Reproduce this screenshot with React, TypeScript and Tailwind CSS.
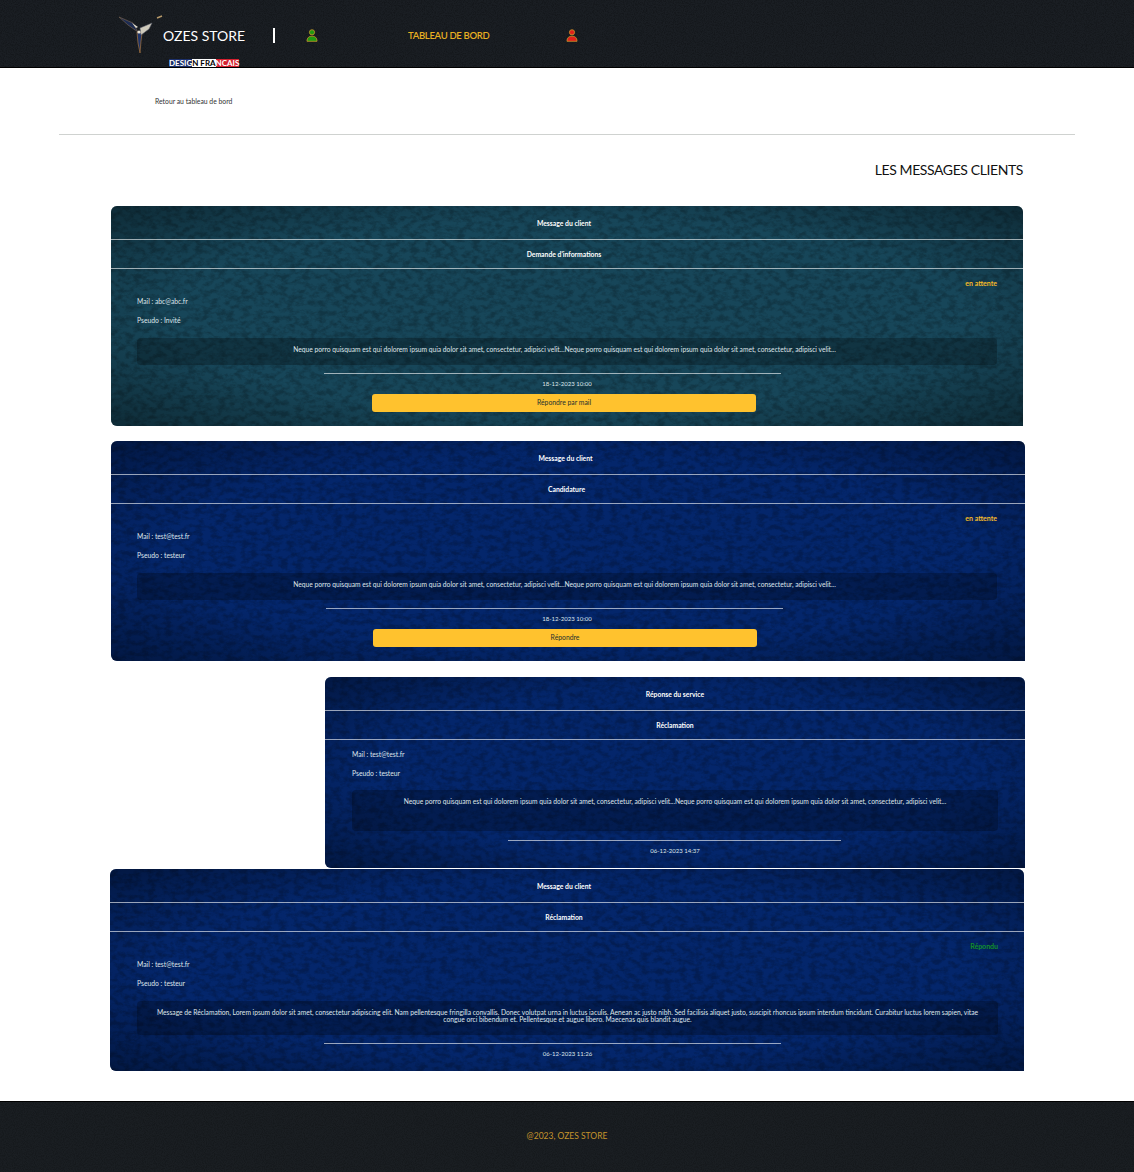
import React, { useId } from 'react';

const LOREM = 'Neque porro quisquam est qui dolorem ipsum quia dolor sit amet, consectetur, adipisci velit...Neque porro quisquam est qui dolorem ipsum quia dolor sit amet, consectetur, adipisci velit...';
const RECLAMATION = 'Message de Réclamation, Lorem ipsum dolor sit amet, consectetur adipiscing elit. Nam pellentesque fringilla convallis. Donec volutpat urna in luctus iaculis. Aenean ac justo nibh. Sed facilisis aliquet justo, suscipit rhoncus ipsum interdum tincidunt. Curabitur luctus lorem sapien, vitae congue orci bibendum et. Pellentesque et augue libero. Maecenas quis blandit augue.';

// grain drawn behind the panels
const Grain: React.FC<{ frequency: string; opacity: number; seed: number }> = ({ frequency, opacity, seed }) => {
  const id = useId();
  return (
    <svg className="absolute inset-0 w-full h-full pointer-events-none" aria-hidden="true">
      <filter id={id}>
        <feTurbulence type="fractalNoise" baseFrequency={frequency} numOctaves={5} seed={seed} />
        <feColorMatrix values="0 0 0 0 0  0 0 0 0 0  0 0 0 0 0  3 0 0 0 -1.2" />
      </filter>
      <rect width="100%" height="100%" filter={`url(#${id})`} opacity={opacity} />
    </svg>
  );
};

const UserIcon: React.FC<{ fill: string }> = ({ fill }) => (
  <svg width="12" height="13" viewBox="0 0 12 13" aria-hidden="true">
    <circle cx="6" cy="3.3" r="2.6" fill={fill} stroke="#c9962a" strokeWidth="0.8" />
    <path d="M1 12.3 C1 8.6 3 7.2 6 7.2 C9 7.2 11 8.6 11 12.3 Z" fill={fill} stroke="#c9962a" strokeWidth="0.8" />
  </svg>
);

const Logo = () => (
  <svg width="46" height="42" viewBox="0 0 46 42" className="shrink-0" aria-hidden="true">
    <path d="M1 2 L15 8 L20 17 L10 10 Z" fill="#1d2c52" stroke="#7d6650" strokeWidth="0.6" />
    <path d="M19 17 L24 18 L23 26 L22 38 L20 28 Z" fill="#1f3468" stroke="#a8743c" strokeWidth="0.7" />
    <path d="M22 13 L34 8 L31 14 L23 20 Z" fill="#cfcabb" stroke="#5c6170" strokeWidth="0.5" />
    <path d="M39 3 L44 1" stroke="#b89a6a" strokeWidth="1.5" />
    <path d="M14 8 L20 12 L18 13 Z" fill="#e6e2d6" />
    <circle cx="21" cy="17" r="1.6" fill="#e6e2d6" />
  </svg>
);

type CardProps = {
  tone: 'teal' | 'navy';
  className: string;
  title: string;
  subject: string;
  titleClass?: string;
  subjectClass?: string;
  status?: { label: string; className: string };
  mail: string;
  pseudo: string;
  body: string;
  boxClass: string;
  dividerClass: string;
  contentClass: string;
  date: string;
  action?: { label: string; className: string };
  seed: number;
};

const MessageCard: React.FC<CardProps> = ({
  tone, className, title, subject, titleClass, subjectClass, status, mail, pseudo, body, boxClass, dividerClass, contentClass, date, action, seed,
}) => (
  <section
    className={`relative overflow-hidden rounded-t-md rounded-bl-md text-[#dfe5ea] ${
      tone === 'teal' ? 'bg-[#174659]' : 'bg-[#04266b]'
    } ${className}`}
  >
    <Grain frequency="0.13 0.19" opacity={0.22} seed={seed} />
    <div className="absolute inset-0 bg-[radial-gradient(ellipse_at_center,transparent_62%,rgba(0,0,0,0.38)_100%)]" />
    <div className="relative">
      <h3 className={`h-[33px] pt-[1px] flex items-center justify-center text-[6.8px] font-bold text-white ${titleClass ?? ''}`}>{title}</h3>
      <div className="h-px bg-white/60" />
      <h4 className={`h-[28px] flex items-center justify-center text-[6.8px] font-bold text-white ${subjectClass ?? titleClass ?? ''}`}>{subject}</h4>
      <div className="h-px bg-white/60" />
      <div className={contentClass}>
        {status && (
          <div className="h-[19px] flex items-end justify-end">
            <span className={`text-[7px] font-bold ${status.className}`}>{status.label}</span>
          </div>
        )}
        <p className={`${status ? 'mt-[4px]' : 'mt-[5px]'} h-[19px] text-[6.75px] leading-[19px]`}>Mail : {mail}</p>
        <p className="h-[19px] text-[6.75px] leading-[19px]">Pseudo : {pseudo}</p>
        <div className={`rounded-[4px] bg-black/25 text-center text-[6.7px] leading-[6.5px] ${boxClass}`}>{body}</div>
        <div className={`h-px bg-white/60 ${dividerClass}`} />
        <p className="h-[19px] pb-[1px] flex items-center justify-center text-[6px]">{date}</p>
        {action && (
          <button className={`block h-[18px] mt-[1px] pb-[1px] rounded-[3px] bg-[#ffc22e] text-[6.8px] text-[#26302f] ${action.className}`}>
            {action.label}
          </button>
        )}
      </div>
    </div>
  </section>
);

export default function App() {
  return (
    <div className="w-[1134px] bg-white font-['Lato',sans-serif] text-[#222]">
      <header className="relative overflow-hidden h-[68px] bg-[#1a1e23] border-b border-black">
        <Grain frequency="0.9" opacity={0.2} seed={4} />
        <div className="relative flex items-start pl-[118px]">
          <div className="mt-[15px]"><Logo /></div>
          <div className="ml-[-1px] w-[80px] flex flex-col items-start">
            <span className="mt-[27px] text-[14px] leading-[18px] whitespace-nowrap text-white">OZES STORE</span>
            <span className="mt-[14px] ml-[6px] flex h-[9px] items-center text-[8px] leading-[9px] font-bold">
              <span className="bg-[#1b2f6b] text-white">DESIG</span>
              <span className="bg-white text-black">N FRA</span>
              <span className="bg-[#d4202f] text-white">NCAIS</span>
            </span>
          </div>
          <div className="ml-[30px] mt-[28px] w-[2px] h-[15px] bg-white" />
          <div className="ml-[31px] mt-[29px]"><UserIcon fill="#1f9a12" /></div>
          <a className="ml-[90px] mt-[29px] text-[9.5px] leading-[14px] font-semibold tracking-[-0.3px] text-[#e8b022]">TABLEAU DE BORD</a>
          <div className="ml-[76px] mt-[29px]"><UserIcon fill="#e0201c" /></div>
        </div>
      </header>

      <main className="pt-[28px] pb-[30px]">
        <a className="block ml-[155px] text-[6.8px] leading-[10px] text-[#333]">Retour au tableau de bord</a>
        <hr className="mt-[28px] mx-[59px] border-0 h-px bg-[#cfd2d0]" />
        <h2 className="mt-[26px] mr-[111px] text-right text-[14px] leading-[18px] tracking-[-0.4px] text-[#111]">LES MESSAGES CLIENTS</h2>

        <div className="mt-[27px] flex flex-col">
          <MessageCard
            tone="teal"
            className="ml-[111px] w-[912px] h-[220px]"
            title="Message du client"
            subject="Demande d'informations"
            titleClass="pr-[6px]"
            status={{ label: 'en attente', className: 'text-[#f4bb2a]' }}
            mail="abc@abc.fr"
            pseudo="Invité"
            body={LOREM}
            boxClass="mt-[8px] h-[27px] pt-[8px] pr-[5px]"
            dividerClass="mt-[8px] ml-[187px] w-[457px]"
            contentClass="px-[26px]"
            date="18-12-2023 10:00"
            action={{ label: 'Répondre par mail', className: 'w-[384px] ml-[235px]' }}
            seed={7}
          />
          <MessageCard
            tone="navy"
            className="mt-[15px] ml-[111px] w-[914px] h-[220px]"
            title="Message du client"
            subject="Candidature"
            titleClass="pr-[5px]"
            subjectClass="pr-[3px]"
            status={{ label: 'en attente', className: 'text-[#f4bb2a]' }}
            mail="test@test.fr"
            pseudo="testeur"
            body={LOREM}
            boxClass="mt-[8px] h-[27px] pt-[8px] pr-[5px]"
            dividerClass="mt-[8px] ml-[189px] w-[457px]"
            contentClass="pl-[26px] pr-[28px]"
            date="18-12-2023 10:00"
            action={{ label: 'Répondre', className: 'w-[384px] ml-[236px]' }}
            seed={11}
          />
          <MessageCard
            tone="navy"
            className="mt-[16px] ml-[325px] w-[700px] h-[191px]"
            title="Réponse du service"
            subject="Réclamation"
            mail="test@test.fr"
            pseudo="testeur"
            body={LOREM}
            boxClass="mt-[7px] h-[41px] pt-[8px]"
            dividerClass="mt-[9px] ml-[156px] w-[333px]"
            contentClass="px-[27px]"
            date="06-12-2023 14:37"
            seed={19}
          />
          <MessageCard
            tone="navy"
            className="mt-[1px] ml-[110px] w-[914px] h-[202px]"
            title="Message du client"
            subject="Réclamation"
            titleClass="pr-[6px]"
            status={{ label: 'Répondu', className: 'text-[#12912a]' }}
            mail="test@test.fr"
            pseudo="testeur"
            body={RECLAMATION}
            boxClass="mt-[8px] h-[34px] pt-[8px] px-[14px]"
            dividerClass="mt-[8px] ml-[187px] w-[457px]"
            contentClass="pl-[27px] pr-[26px]"
            date="06-12-2023 11:26"
            seed={23}
          />
        </div>
      </main>

      <footer className="relative overflow-hidden h-[71px] pb-[2px] bg-[#1a1e22] border-t border-black flex items-center justify-center">
        <Grain frequency="0.9" opacity={0.16} seed={9} />
        <span className="relative text-[8.5px] text-[#c4942c]">@2023, OZES STORE</span>
      </footer>
    </div>
  );
}
